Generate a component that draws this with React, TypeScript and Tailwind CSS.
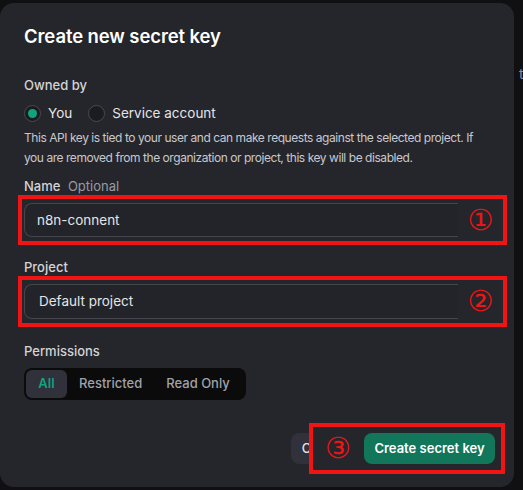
import React from 'react'

const font = { fontFamily: 'Inter, "Noto Sans", sans-serif' }
const digitFont = { fontFamily: '"DejaVu Sans", sans-serif' }

function Radio({ checked }: { checked?: boolean }) {
  return (
    <span className="flex h-[17px] w-[17px] items-center justify-center rounded-full border border-[#4a4b52] bg-[#1b1c20]">
      {checked && <span className="h-[9px] w-[9px] rounded-full bg-[#10a37f]" />}
    </span>
  )
}

function Marked({ n, children }: { n: string; children: React.ReactNode }) {
  return (
    <div className="-ml-[6px] -mr-[17px] flex items-center border-4 border-[#f01414] py-[4px] pl-[2px]">
      <div className="flex-1">{children}</div>
      <span className="flex w-[45px] justify-center text-[29px] leading-none text-[#f01414]" style={digitFont}>
        {n}
      </span>
    </div>
  )
}

export default function App() {
  return (
    <div className="relative h-[490px] w-[523px] overflow-hidden bg-[#101012] text-white" style={font}>
      <span className="absolute left-[519px] top-[63px] text-[14px] text-[#8e8ea0]">t</span>

      <div className="mt-[3px] flex h-[484px] w-[514px] flex-col rounded-[14px] bg-[#25262b] px-6 pt-[21px]">
        <h2 className="text-[18.5px] font-semibold leading-6 tracking-[-0.1px]">Create new secret key</h2>

        {/* Owned by */}
        <div className="mt-[27px] text-[13px] font-medium leading-5 text-[#d4d4d8]">Owned by</div>
        <div className="mt-[8px] flex items-center text-[13.5px] leading-5 text-[#e4e4e7]">
          <Radio checked />
          <span className="ml-[7px] mr-[16px]">You</span>
          <Radio />
          <span className="ml-[7px]">Service account</span>
        </div>
        <p className="mt-[5px] text-[12px] leading-5 tracking-[-0.45px] text-[#c8c8cf]">
          This API key is tied to your user and can make requests against the selected project. If you are removed from the
          organization or project, this key will be disabled.
        </p>

        {/* Name */}
        <div className="mt-[8px] text-[13px] font-medium leading-5 text-[#d4d4d8]">
          Name <span className="ml-1 font-normal text-[#9a9aa3]">Optional</span>
        </div>
        <div className="-mt-[1px]">
          <Marked n="①">
            <div className="flex h-[34px] items-center rounded-l-[8px] border-y border-l border-[#45464d] bg-[#232429] pl-[12px] text-[13.5px] text-[#e4e4e7]">
              n8n-connent
            </div>
          </Marked>
        </div>

        {/* Project */}
        <div className="mt-[12px] text-[13px] font-medium leading-5 text-[#d4d4d8]">Project</div>
        <div className="-mt-[1px]">
          <Marked n="②">
            <div className="flex h-[35px] items-center rounded-l-[8px] border-y border-l border-[#45464d] bg-[#232429] pl-[14px] text-[13.5px] text-[#e4e4e7]">
              Default project
            </div>
          </Marked>
        </div>

        {/* Permissions */}
        <div className="mt-[14px] text-[13px] font-medium leading-5 text-[#d4d4d8]">Permissions</div>
        <div className="mt-[7px] flex w-[222px] items-center rounded-[8px] bg-[#0b0b0c] p-[2px] text-[13px]">
          <span className="flex h-[28px] w-[41px] items-center justify-center rounded-[6px] bg-[#30313a] font-semibold text-[#10a37f]">
            All
          </span>
          <span className="ml-[12px] font-medium text-[#a1a1aa]">Restricted</span>
          <span className="ml-[24px] font-medium text-[#a1a1aa]">Read Only</span>
        </div>

        {/* Footer */}
        <div className="mt-auto mb-[13px] -mr-[15px] flex items-center justify-end">
          <button className="h-[31px] rounded-[8px] bg-[#30313a] px-[11px] text-[13px] font-medium text-[#e4e4e7]">Cancel</button>
          <div className="relative -ml-[47px] flex items-center border-4 border-[#f01414] bg-[#25262b] py-[6px] pl-[12px] pr-[6px]">
            <span className="w-[26px] text-center text-[29px] leading-none text-[#f01414]" style={digitFont}>
              ③
            </span>
            <button className="ml-[13px] h-[31px] w-[131px] rounded-[8px] bg-[#11765a] text-[13px] font-semibold text-white">
              Create secret key
            </button>
          </div>
        </div>
      </div>
    </div>
  )
}
